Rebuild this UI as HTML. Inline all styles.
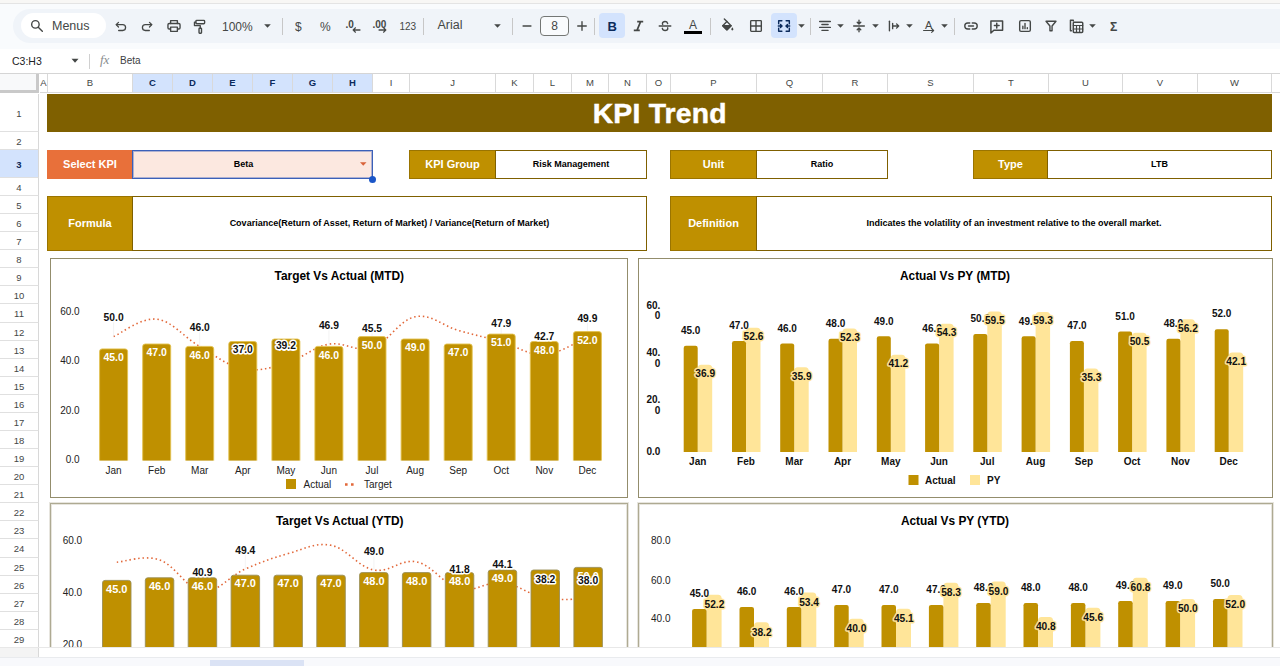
<!DOCTYPE html><html><head><meta charset="utf-8"><title>KPI Trend</title><style>
*{box-sizing:border-box;margin:0;padding:0}
html,body{width:1280px;height:666px;overflow:hidden;background:#f9fbfd;font-family:"Liberation Sans", sans-serif;}
.abs{position:absolute}
#root{position:relative;width:1280px;height:666px;overflow:hidden;background:#f9fbfd}
.ch{position:absolute;top:74px;height:19px;font-size:9.5px;line-height:18px;text-align:center;color:#444746;background:#fff;border-right:1px solid #d9d9d9;border-bottom:1px solid #d9d9d9}
.ch.sel{background:#d3e3fd;color:#0b2a5b;font-weight:bold}
.rh{position:absolute;left:0;width:39px;font-size:9.5px;text-align:center;color:#444746;background:#fff;border-right:1px solid #d8d8d8;border-bottom:1px solid #e0e0e0}
.rh.sel{background:#d3e3fd;color:#0b2a5b;font-weight:bold}
.lbl{position:absolute;background:#bf9000;color:#fff;font-weight:bold;font-size:11px;text-align:center;border:1px solid #7f6000}
.val{position:absolute;background:#fff;color:#000;font-weight:bold;font-size:9px;text-align:center;border:1px solid #7f6000}
.chart{position:absolute;background:#fff;border:1px solid #938d6c}
svg text{font-family:"Liberation Sans", sans-serif}
.tb{position:absolute;color:#444746}
</style></head><body><div id="root">
<div class="abs" style="left:0;top:0;width:1280px;height:3px;background:#f8f7f5"></div>
<div class="abs" style="left:0;top:3px;width:1280px;height:1px;background:#e4e4e4"></div>
<div class="abs" style="left:13px;top:9px;width:1290px;height:34px;border-radius:17px;background:#f0f4f9"></div>
<div class="abs" style="left:21px;top:13px;width:85px;height:25px;border-radius:13px;background:#fff"></div>
<svg class="abs" style="left:29.0px;top:18.0px" width="16" height="16" viewBox="0 0 18 18" fill="none" stroke="#444746" stroke-width="1.55" stroke-linecap="round" stroke-linejoin="round"><circle cx="7.2" cy="7.2" r="4.2"/><path d="M10.4 10.4L15 15"/></svg>
<div class="tb" style="left:52px;top:16.9px;height:18px;line-height:18px;font-size:12.5px;font-weight:normal;color:#444746;white-space:nowrap;">Menus</div>
<svg class="abs" style="left:113.5px;top:19.3px" width="15" height="15" viewBox="0 0 18 18" fill="none" stroke="#444746" stroke-width="1.55" stroke-linecap="round" stroke-linejoin="round"><path d="M5.4 4L2.6 6.8l2.8 2.8"/><path d="M3 6.8h7.4a3.5 3.5 0 0 1 0 7H5.6"/></svg>
<svg class="abs" style="left:139.0px;top:19.3px" width="15" height="15" viewBox="0 0 18 18" fill="none" stroke="#444746" stroke-width="1.55" stroke-linecap="round" stroke-linejoin="round"><path d="M12.6 4l2.8 2.8-2.8 2.8"/><path d="M15 6.8H7.6a3.5 3.5 0 0 0 0 7h4.8"/></svg>
<svg class="abs" style="left:165.7px;top:18.0px" width="16" height="16" viewBox="0 0 18 18" fill="none" stroke="#444746" stroke-width="1.55" stroke-linecap="round" stroke-linejoin="round"><path d="M5.2 6.2V3h7.6v3.2"/><rect x="2.2" y="6.2" width="13.6" height="6.2" rx="1.4"/><rect x="5.2" y="10.2" width="7.6" height="4.8" fill="#f0f4f9"/></svg>
<svg class="abs" style="left:192.0px;top:18.6px" width="16" height="16" viewBox="0 0 18 18" fill="none" stroke="#444746" stroke-width="1.55" stroke-linecap="round" stroke-linejoin="round"><rect x="4.4" y="1.6" width="9.8" height="3.8" rx="0.9"/><path d="M4.4 3.5H2.8v3.9h6.5v3"/><rect x="7.9" y="10.4" width="2.8" height="5.6" rx="0.7"/></svg>
<div class="tb" style="left:222px;top:17.5px;height:18px;line-height:18px;font-size:12px;font-weight:normal;color:#444746;white-space:nowrap;">100%</div>
<svg class="abs" style="left:263.5px;top:24.4px" width="7" height="4" viewBox="0 0 7 4"><path d="M0.2 0.2h6.6L3.5 3.8z" fill="#444746"/></svg>
<div class="abs" style="left:282px;top:17.5px;width:1px;height:17px;background:#c7c7c7"></div>
<div class="tb" style="left:295px;top:17.5px;height:18px;line-height:18px;font-size:12px;font-weight:normal;color:#444746;white-space:nowrap;">$</div>
<div class="tb" style="left:320px;top:17.5px;height:18px;line-height:18px;font-size:12px;font-weight:normal;color:#444746;white-space:nowrap;">%</div>
<div class="tb" style="left:345.5px;top:17.5px;height:18px;line-height:18px;font-size:10px;font-weight:bold;color:#444746;white-space:nowrap;letter-spacing:-0.1px;margin-top:-2px">.0</div>
<svg class="abs" style="left:351.5px;top:27.3px" width="9" height="6" viewBox="0 0 10 7" fill="none" stroke="#444746" stroke-width="1.6" stroke-linecap="round" stroke-linejoin="round"><path d="M9 3.5H1.2M3.6 1L1.2 3.5l2.4 2.5"/></svg>
<div class="tb" style="left:372.5px;top:17.5px;height:18px;line-height:18px;font-size:10px;font-weight:bold;color:#444746;white-space:nowrap;letter-spacing:-0.1px;margin-top:-2px">.00</div>
<svg class="abs" style="left:377.8px;top:27.3px" width="9" height="6" viewBox="0 0 10 7" fill="none" stroke="#444746" stroke-width="1.6" stroke-linecap="round" stroke-linejoin="round"><path d="M1 3.5h7.8M6.4 1l2.4 2.5-2.4 2.5"/></svg>
<div class="tb" style="left:399.5px;top:17.5px;height:18px;line-height:18px;font-size:10px;font-weight:normal;color:#444746;white-space:nowrap;">123</div>
<div class="abs" style="left:423px;top:17.5px;width:1px;height:17px;background:#c7c7c7"></div>
<div class="tb" style="left:437.5px;top:16.3px;height:18px;line-height:18px;font-size:12.5px;font-weight:normal;color:#444746;white-space:nowrap;">Arial</div>
<svg class="abs" style="left:493.5px;top:24.4px" width="7" height="4" viewBox="0 0 7 4"><path d="M0.2 0.2h6.6L3.5 3.8z" fill="#444746"/></svg>
<div class="abs" style="left:512px;top:17.5px;width:1px;height:17px;background:#c7c7c7"></div>
<svg class="abs" style="left:519.3px;top:17.6px" width="16" height="16" viewBox="0 0 18 18" fill="none" stroke="#444746" stroke-width="1.55" stroke-linecap="round" stroke-linejoin="round"><path d="M4.6 9h8.8"/></svg>
<div class="abs" style="left:540px;top:16px;width:29px;height:20px;border:1px solid #747775;border-radius:4px;background:#f9fbfd;font-size:12px;line-height:18px;text-align:center;color:#444746">8</div>
<svg class="abs" style="left:573.5px;top:17.8px" width="16" height="16" viewBox="0 0 18 18" fill="none" stroke="#444746" stroke-width="1.55" stroke-linecap="round" stroke-linejoin="round"><path d="M4.2 9h9.6M9 4.2v9.6"/></svg>
<div class="abs" style="left:594px;top:17.5px;width:1px;height:17px;background:#c7c7c7"></div>
<div class="abs" style="left:599px;top:13px;width:26px;height:25px;border-radius:4px;background:#d3e3fd"></div>
<div class="tb" style="left:607.5px;top:17.5px;height:18px;line-height:18px;font-size:13px;font-weight:bold;color:#0b2a5b;white-space:nowrap;">B</div>
<svg class="abs" style="left:632px;top:19px" width="13" height="14" viewBox="0 0 13 14" fill="none" stroke="#444746" stroke-width="1.7" stroke-linecap="butt"><path d="M5.2 2.7h6M1.8 11.3h6M8.6 2.7L5 11.3"/></svg>
<svg class="abs" style="left:657.0px;top:18.0px" width="16" height="16" viewBox="0 0 18 18" fill="none" stroke="#444746" stroke-width="1.55" stroke-linecap="round" stroke-linejoin="round"><path d="M2.5 9h13" /><path d="M12 6.2c-.4-1.4-1.5-2.2-3-2.2-1.7 0-2.9.9-2.9 2.2 0 .4.1.8.3 1.1M6 11.6c.3 1.5 1.5 2.4 3.1 2.4 1.7 0 3-.9 3-2.3 0-.3 0-.5-.1-.7"/></svg>
<div class="tb" style="left:689px;top:15.5px;height:18px;line-height:18px;font-size:12px;font-weight:normal;color:#444746;white-space:nowrap;font-weight:normal">A</div>
<div class="abs" style="left:684px;top:31px;width:18px;height:3px;background:#000"></div>
<div class="abs" style="left:710px;top:17.5px;width:1px;height:17px;background:#c7c7c7"></div>
<svg class="abs" style="left:719.0px;top:16.5px" width="16" height="16" viewBox="0 0 18 18" fill="none" stroke="#444746" stroke-width="1.55" stroke-linecap="round" stroke-linejoin="round"><path d="M6 2.2l2.9 2.9"/><path d="M8.9 5.1L4.2 9.8 8.9 14.5l4.7-4.7z" stroke-width="1.5"/><path d="M4.2 9.8h9.4L8.9 14.5z" fill="#444746"/><path d="M15 11.6c.8 1.1 1.2 1.8 1.2 2.3a1.2 1.2 0 0 1-2.4 0c0-.5.4-1.2 1.2-2.3z" fill="#444746" stroke="none"/></svg>
<svg class="abs" style="left:748.0px;top:18.0px" width="16" height="16" viewBox="0 0 18 18" fill="none" stroke="#444746" stroke-width="1.55" stroke-linecap="round" stroke-linejoin="round"><rect x="3" y="3" width="12" height="12" rx="0.8"/><path d="M9 3v12M3 9h12"/></svg>
<div class="abs" style="left:771px;top:13px;width:26px;height:25px;border-radius:4px;background:#d3e3fd"></div>
<svg class="abs" style="left:776px;top:18px" width="16" height="16" viewBox="0 0 18 18" fill="none" stroke="#0b2a5b" stroke-width="1.6" stroke-linecap="round" stroke-linejoin="round"><path d="M6.6 3H3v3.6M11.4 3H15v3.6M6.6 15H3v-3.6M11.4 15H15v-3.6"/><path d="M2.6 9h4M5 7.2L6.8 9 5 10.8M15.4 9h-4M13 7.2L11.2 9 13 10.8"/></svg>
<svg class="abs" style="left:797.5px;top:24.4px" width="7" height="4" viewBox="0 0 7 4"><path d="M0.2 0.2h6.6L3.5 3.8z" fill="#444746"/></svg>
<div class="abs" style="left:810px;top:17.5px;width:1px;height:17px;background:#c7c7c7"></div>
<svg class="abs" style="left:817.0px;top:18.0px" width="16" height="16" viewBox="0 0 18 18" fill="none" stroke="#444746" stroke-width="1.55" stroke-linecap="round" stroke-linejoin="round"><path d="M3 4h12M5.5 7.3h7M3 10.6h12M5.5 13.9h7"/></svg>
<svg class="abs" style="left:836.5px;top:24.4px" width="7" height="4" viewBox="0 0 7 4"><path d="M0.2 0.2h6.6L3.5 3.8z" fill="#444746"/></svg>
<svg class="abs" style="left:851.0px;top:18.0px" width="16" height="16" viewBox="0 0 18 18" fill="none" stroke="#444746" stroke-width="1.55" stroke-linecap="round" stroke-linejoin="round"><path d="M3 9h12"/><path d="M9 2.5v4M7 4.8l2 2 2-2M9 15.5v-4M7 13.2l2-2 2 2"/></svg>
<svg class="abs" style="left:871.5px;top:24.4px" width="7" height="4" viewBox="0 0 7 4"><path d="M0.2 0.2h6.6L3.5 3.8z" fill="#444746"/></svg>
<svg class="abs" style="left:885.0px;top:18.0px" width="16" height="16" viewBox="0 0 18 18" fill="none" stroke="#444746" stroke-width="1.55" stroke-linecap="round" stroke-linejoin="round"><path d="M5 3.6v10.8"/><path d="M8.6 6v6M8.6 9h6.8M13 6.6L15.4 9 13 11.4"/></svg>
<svg class="abs" style="left:905.5px;top:24.4px" width="7" height="4" viewBox="0 0 7 4"><path d="M0.2 0.2h6.6L3.5 3.8z" fill="#444746"/></svg>
<div class="tb" style="left:925px;top:15.7px;height:18px;line-height:18px;font-size:11px;font-weight:normal;color:#444746;white-space:nowrap;">A</div>
<svg class="abs" style="left:922px;top:26.6px" width="14" height="7" viewBox="0 0 18 8" fill="none" stroke="#444746" stroke-width="1.4" stroke-linecap="round" stroke-linejoin="round"><path d="M2 4h13M12.4 1.6L15 4l-2.6 2.4"/></svg>
<svg class="abs" style="left:940.5px;top:24.4px" width="7" height="4" viewBox="0 0 7 4"><path d="M0.2 0.2h6.6L3.5 3.8z" fill="#444746"/></svg>
<div class="abs" style="left:954px;top:17.5px;width:1px;height:17px;background:#c7c7c7"></div>
<svg class="abs" style="left:962.0px;top:18.0px" width="18" height="16" viewBox="-1 0 20 18" fill="none" stroke="#444746" stroke-width="1.55" stroke-linecap="round" stroke-linejoin="round"><path d="M7.6 5.6H5.4a3.4 3.4 0 0 0 0 6.8h2.2M10.4 5.6h2.2a3.4 3.4 0 0 1 0 6.8h-2.2M6.2 9h5.6"/></svg>
<svg class="abs" style="left:988.2px;top:17.6px" width="17.5" height="17.5" viewBox="0 0 18 18" fill="none" stroke="#444746" stroke-width="1.55" stroke-linecap="round" stroke-linejoin="round"><path d="M3 3h12v9.6H6L3 15.4z"/><path d="M9 5.4v4.8M6.6 7.8h4.8"/></svg>
<svg class="abs" style="left:1016.6px;top:18.0px" width="16" height="16" viewBox="0 0 18 18" fill="none" stroke="#444746" stroke-width="1.55" stroke-linecap="round" stroke-linejoin="round"><rect x="3" y="3" width="12" height="12" rx="1.6"/><path d="M6.6 12V9.2M9 12V6M11.6 12v-1"/></svg>
<svg class="abs" style="left:1043.0px;top:18.0px" width="16" height="16" viewBox="0 0 18 18" fill="none" stroke="#444746" stroke-width="1.55" stroke-linecap="round" stroke-linejoin="round"><path d="M3.4 3.6h11.2L10.2 9v5.4H7.8V9z"/></svg>
<svg class="abs" style="left:1067.5px;top:17.7px" width="17" height="17" viewBox="0 0 18 18" fill="none" stroke="#444746" stroke-width="1.55" stroke-linecap="round" stroke-linejoin="round"><path d="M5.6 3.2V2.4h-3v11h1"/><rect x="5.6" y="4.4" width="10" height="11" rx="1"/><path d="M5.6 8h10M5.6 11.6h10M9 8v7.4M12.3 8v7.4" stroke-width="1.2"/></svg>
<svg class="abs" style="left:1088.5px;top:24.4px" width="7" height="4" viewBox="0 0 7 4"><path d="M0.2 0.2h6.6L3.5 3.8z" fill="#444746"/></svg>
<div class="tb" style="left:1109.5px;top:17.5px;height:18px;line-height:18px;font-size:13.5px;font-weight:bold;color:#444746;white-space:nowrap;transform:scaleX(0.9);transform-origin:left">&Sigma;</div>
<div class="abs" style="left:0;top:49px;width:1280px;height:25px;background:#fff"></div>
<div class="abs" style="left:12px;top:54px;font-size:10.5px;color:#202124;line-height:14px">C3:H3</div>
<svg class="abs" style="left:70px;top:58px" width="10" height="6" viewBox="0 0 10 6"><path d="M1.5 0.8h7L5 4.8z" fill="#444746"/></svg>
<div class="abs" style="left:89px;top:54px;width:1px;height:15px;background:#d0d0d0"></div>
<div class="abs" style="left:100px;top:52px;font-size:13px;font-style:italic;color:#8a8d8f;font-family:'Liberation Serif',serif;line-height:16px">fx</div>
<div class="abs" style="left:120px;top:54px;font-size:10px;color:#3c4043;line-height:14px">Beta</div>
<div class="abs" style="left:0;top:73px;width:1280px;height:1px;background:#d5d5d5"></div>
<div class="abs" style="left:0;top:74px;width:1280px;height:573px;background:#fff"></div>
<div class="abs" style="left:0;top:74px;width:39px;height:19px;background:#f8f9fa;border-right:3px solid #c9c9c9;border-bottom:3px solid #c9c9c9"></div>
<div class="ch" style="left:40px;width:8px">A</div>
<div class="ch" style="left:48px;width:85px">B</div>
<div class="ch sel" style="left:133px;width:40px">C</div>
<div class="ch sel" style="left:173px;width:40px">D</div>
<div class="ch sel" style="left:213px;width:40px">E</div>
<div class="ch sel" style="left:253px;width:40px">F</div>
<div class="ch sel" style="left:293px;width:40px">G</div>
<div class="ch sel" style="left:333px;width:40px">H</div>
<div class="ch" style="left:373px;width:37px">I</div>
<div class="ch" style="left:410px;width:86px">J</div>
<div class="ch" style="left:496px;width:38px">K</div>
<div class="ch" style="left:534px;width:38px">L</div>
<div class="ch" style="left:572px;width:37px">M</div>
<div class="ch" style="left:609px;width:38px">N</div>
<div class="ch" style="left:647px;width:24px">O</div>
<div class="ch" style="left:671px;width:86px">P</div>
<div class="ch" style="left:757px;width:66px">Q</div>
<div class="ch" style="left:823px;width:65px">R</div>
<div class="ch" style="left:888px;width:86px">S</div>
<div class="ch" style="left:974px;width:75px">T</div>
<div class="ch" style="left:1049px;width:74px">U</div>
<div class="ch" style="left:1123px;width:75px">V</div>
<div class="ch" style="left:1198px;width:74px">W</div>
<div class="ch" style="left:1272px;width:19px"></div>
<div class="rh" style="top:94px;height:38px;line-height:39px">1</div>
<div class="rh" style="top:132px;height:18px;line-height:19px">2</div>
<div class="rh sel" style="top:150px;height:28px;line-height:29px">3</div>
<div class="rh" style="top:178px;height:18px;line-height:19px">4</div>
<div class="rh" style="top:196px;height:18px;line-height:19px">5</div>
<div class="rh" style="top:214px;height:18px;line-height:19px">6</div>
<div class="rh" style="top:232px;height:18px;line-height:19px">7</div>
<div class="rh" style="top:250px;height:18px;line-height:19px">8</div>
<div class="rh" style="top:268px;height:18px;line-height:19px">9</div>
<div class="rh" style="top:286px;height:18px;line-height:19px">10</div>
<div class="rh" style="top:304px;height:19px;line-height:20px">11</div>
<div class="rh" style="top:323px;height:18px;line-height:19px">12</div>
<div class="rh" style="top:341px;height:18px;line-height:19px">13</div>
<div class="rh" style="top:359px;height:18px;line-height:19px">14</div>
<div class="rh" style="top:377px;height:18px;line-height:19px">15</div>
<div class="rh" style="top:395px;height:18px;line-height:19px">16</div>
<div class="rh" style="top:413px;height:18px;line-height:19px">17</div>
<div class="rh" style="top:431px;height:18px;line-height:19px">18</div>
<div class="rh" style="top:449px;height:18px;line-height:19px">19</div>
<div class="rh" style="top:467px;height:18px;line-height:19px">20</div>
<div class="rh" style="top:485px;height:18px;line-height:19px">21</div>
<div class="rh" style="top:503px;height:18px;line-height:19px">22</div>
<div class="rh" style="top:521px;height:18px;line-height:19px">23</div>
<div class="rh" style="top:539px;height:19px;line-height:20px">24</div>
<div class="rh" style="top:558px;height:18px;line-height:19px">25</div>
<div class="rh" style="top:576px;height:18px;line-height:19px">26</div>
<div class="rh" style="top:594px;height:18px;line-height:19px">27</div>
<div class="rh" style="top:612px;height:18px;line-height:19px">28</div>
<div class="rh" style="top:630px;height:18px;line-height:19px">29</div>
<div class="rh" style="top:648px;height:18px;line-height:19px">30</div>
<div class="abs" style="left:47px;top:94px;width:1225px;height:38px;background:#7f6000;color:#fff;font-weight:bold;font-size:27.8px;line-height:39.5px;text-align:center;letter-spacing:0.2px"><span style="display:inline-block;transform:scaleX(1.02);-webkit-text-stroke:0.45px #fff">KPI Trend</span></div>
<div class="lbl" style="left:47px;top:150px;width:86px;height:29px;line-height:27px;background:#e8703a;border-color:#e8703a;font-size:11px">Select KPI</div>
<div class="abs" style="left:132px;top:150px;width:241px;height:29px;background:#fce8e0;border:1px solid #3b60b9;box-shadow:inset 0 0 0 1px rgba(59,96,185,0.4);font-size:9px;font-weight:bold;color:#000;text-align:center;line-height:27px;padding-right:18px">Beta</div>
<svg class="abs" style="left:360px;top:162px" width="6.5" height="4" viewBox="0 0 7 4"><path d="M0 0h7L3.5 4z" fill="#d9633a"/></svg>
<div class="abs" style="left:368.7px;top:175.8px;width:7px;height:7px;border-radius:3.5px;background:#1a56c8"></div>
<div class="lbl" style="left:409px;top:150px;width:87px;height:29px;line-height:27px;background:#bf9000;border-color:#9a7400;font-size:11px">KPI Group</div>
<div class="val" style="left:495px;top:150px;width:152px;height:29px;line-height:27px;">Risk Management</div>
<div class="lbl" style="left:670px;top:150px;width:87px;height:29px;line-height:27px;background:#bf9000;border-color:#9a7400;font-size:11px">Unit</div>
<div class="val" style="left:756px;top:150px;width:132px;height:29px;line-height:27px;">Ratio</div>
<div class="lbl" style="left:973px;top:150px;width:75px;height:29px;line-height:27px;background:#bf9000;border-color:#9a7400;font-size:11px">Type</div>
<div class="val" style="left:1047px;top:150px;width:225px;height:29px;line-height:27px;">LTB</div>
<div class="lbl" style="left:47px;top:196px;width:86px;height:55px;line-height:53px;background:#bf9000;border-color:#9a7400;font-size:11px">Formula</div>
<div class="val" style="left:132px;top:196px;width:515px;height:55px;line-height:53px;padding-right:0px">Covariance(Return of Asset, Return of Market) / Variance(Return of Market)</div>
<div class="lbl" style="left:670px;top:196px;width:87px;height:55px;line-height:53px;background:#bf9000;border-color:#9a7400;font-size:11px">Definition</div>
<div class="val" style="left:756px;top:196px;width:516px;height:55px;line-height:53px;">Indicates the volatility of an investment relative to the overall market.</div>
<div class="chart" style="left:50px;top:258px;width:578px;height:240px;overflow:hidden;">
<svg width="578" height="240" viewBox="0 0 578 240" style="position:absolute;left:-1px;top:-1px">
<text x="289.3" y="21.6" font-size="11.9" font-weight="bold" fill="#000" text-anchor="middle">Target Vs Actual (MTD)</text>
<text x="29.6" y="56.7" font-size="10" font-weight="normal" fill="#222" text-anchor="end">60.0</text>
<text x="29.6" y="105.7" font-size="10" font-weight="normal" fill="#222" text-anchor="end">40.0</text>
<text x="29.6" y="155.7" font-size="10" font-weight="normal" fill="#222" text-anchor="end">20.0</text>
<text x="29.6" y="205.2" font-size="10" font-weight="normal" fill="#222" text-anchor="end">0.0</text>
<path d="M63.6 78.6 C71.6 75.3 90.6 59.4 106.7 61.2 C122.7 63.1 133.7 79.2 149.7 88.4 C165.8 97.7 176.7 107.6 192.8 110.7 C208.9 113.9 219.8 109.9 235.9 105.3 C252.0 100.7 262.9 89.1 278.9 86.2 C295.0 83.3 305.9 94.8 322.0 89.7 C338.1 84.6 349.0 62.0 365.1 58.8 C381.2 55.5 392.1 67.7 408.2 72.4 C424.2 77.0 435.2 79.2 451.2 83.7 C467.3 88.3 478.2 97.5 494.3 96.6 C510.4 95.7 529.3 82.1 537.4 78.8" fill="none" stroke="#e2683a" stroke-width="1.6" stroke-dasharray="1.5 2.85" stroke-linecap="butt"/>
<path d="M63.6 64.0V78.6" stroke="#e6e6e6" stroke-width="0.5"/>
<path d="M149.7 74.0V88.4" stroke="#e6e6e6" stroke-width="0.5"/>
<path d="M192.8 96.5V110.7" stroke="#e6e6e6" stroke-width="0.5"/>
<path d="M235.9 92.0V105.3" stroke="#e6e6e6" stroke-width="0.5"/>
<path d="M278.9 72.0V86.2" stroke="#e6e6e6" stroke-width="0.5"/>
<path d="M322.0 75.0V89.7" stroke="#e6e6e6" stroke-width="0.5"/>
<path d="M451.2 70.0V83.7" stroke="#e6e6e6" stroke-width="0.5"/>
<path d="M494.3 83.0V96.6" stroke="#e6e6e6" stroke-width="0.5"/>
<path d="M537.4 65.0V78.8" stroke="#e6e6e6" stroke-width="0.5"/>
<rect x="49.6" y="90.9" width="28" height="114.4" rx="2.5" fill="#bf9000" stroke="#e3c250" stroke-width="0.9"/>
<rect x="92.7" y="86.0" width="28" height="119.3" rx="2.5" fill="#bf9000" stroke="#e3c250" stroke-width="0.9"/>
<rect x="135.7" y="88.4" width="28" height="116.9" rx="2.5" fill="#bf9000" stroke="#e3c250" stroke-width="0.9"/>
<rect x="178.8" y="83.5" width="28" height="121.8" rx="2.5" fill="#bf9000" stroke="#e3c250" stroke-width="0.9"/>
<rect x="221.9" y="81.0" width="28" height="124.3" rx="2.5" fill="#bf9000" stroke="#e3c250" stroke-width="0.9"/>
<rect x="264.9" y="88.4" width="28" height="116.9" rx="2.5" fill="#bf9000" stroke="#e3c250" stroke-width="0.9"/>
<rect x="308.0" y="78.6" width="28" height="126.8" rx="2.5" fill="#bf9000" stroke="#e3c250" stroke-width="0.9"/>
<rect x="351.1" y="81.0" width="28" height="124.3" rx="2.5" fill="#bf9000" stroke="#e3c250" stroke-width="0.9"/>
<rect x="394.2" y="86.0" width="28" height="119.3" rx="2.5" fill="#bf9000" stroke="#e3c250" stroke-width="0.9"/>
<rect x="437.2" y="76.1" width="28" height="129.2" rx="2.5" fill="#bf9000" stroke="#e3c250" stroke-width="0.9"/>
<rect x="480.3" y="83.5" width="28" height="121.8" rx="2.5" fill="#bf9000" stroke="#e3c250" stroke-width="0.9"/>
<rect x="523.4" y="73.6" width="28" height="131.7" rx="2.5" fill="#bf9000" stroke="#e3c250" stroke-width="0.9"/>
<rect x="47.6" y="202.6" width="516.8" height="5" fill="#fff"/>
<text x="63.6" y="103.1" font-size="10.5" font-weight="bold" fill="#fff" text-anchor="middle">45.0</text>
<text x="106.7" y="98.2" font-size="10.5" font-weight="bold" fill="#fff" text-anchor="middle">47.0</text>
<text x="149.7" y="100.6" font-size="10.5" font-weight="bold" fill="#fff" text-anchor="middle">46.0</text>
<text x="192.8" y="95.7" font-size="10.5" font-weight="bold" fill="#fff" text-anchor="middle">48.0</text>
<text x="235.9" y="93.2" font-size="10.5" font-weight="bold" fill="#fff" text-anchor="middle">49.0</text>
<text x="278.9" y="100.6" font-size="10.5" font-weight="bold" fill="#fff" text-anchor="middle">46.0</text>
<text x="322.0" y="90.8" font-size="10.5" font-weight="bold" fill="#fff" text-anchor="middle">50.0</text>
<text x="365.1" y="93.2" font-size="10.5" font-weight="bold" fill="#fff" text-anchor="middle">49.0</text>
<text x="408.2" y="98.2" font-size="10.5" font-weight="bold" fill="#fff" text-anchor="middle">47.0</text>
<text x="451.2" y="88.3" font-size="10.5" font-weight="bold" fill="#fff" text-anchor="middle">51.0</text>
<text x="494.3" y="95.7" font-size="10.5" font-weight="bold" fill="#fff" text-anchor="middle">48.0</text>
<text x="537.4" y="85.8" font-size="10.5" font-weight="bold" fill="#fff" text-anchor="middle">52.0</text>
<text x="63.6" y="62.7" font-size="10.3" font-weight="bold" fill="#111" text-anchor="middle" stroke="#fff" stroke-width="3" stroke-linejoin="round" paint-order="stroke">50.0</text>
<text x="149.7" y="72.7" font-size="10.3" font-weight="bold" fill="#111" text-anchor="middle" stroke="#fff" stroke-width="3" stroke-linejoin="round" paint-order="stroke">46.0</text>
<text x="192.8" y="95.2" font-size="10.3" font-weight="bold" fill="#111" text-anchor="middle" stroke="#fff" stroke-width="3" stroke-linejoin="round" paint-order="stroke">37.0</text>
<text x="235.9" y="90.7" font-size="10.3" font-weight="bold" fill="#111" text-anchor="middle" stroke="#fff" stroke-width="3" stroke-linejoin="round" paint-order="stroke">39.2</text>
<text x="278.9" y="70.7" font-size="10.3" font-weight="bold" fill="#111" text-anchor="middle" stroke="#fff" stroke-width="3" stroke-linejoin="round" paint-order="stroke">46.9</text>
<text x="322.0" y="73.7" font-size="10.3" font-weight="bold" fill="#111" text-anchor="middle" stroke="#fff" stroke-width="3" stroke-linejoin="round" paint-order="stroke">45.5</text>
<text x="451.2" y="68.7" font-size="10.3" font-weight="bold" fill="#111" text-anchor="middle" stroke="#fff" stroke-width="3" stroke-linejoin="round" paint-order="stroke">47.9</text>
<text x="494.3" y="81.7" font-size="10.3" font-weight="bold" fill="#111" text-anchor="middle" stroke="#fff" stroke-width="3" stroke-linejoin="round" paint-order="stroke">42.7</text>
<text x="537.4" y="63.7" font-size="10.3" font-weight="bold" fill="#111" text-anchor="middle" stroke="#fff" stroke-width="3" stroke-linejoin="round" paint-order="stroke">49.9</text>
<text x="63.6" y="215.7" font-size="10" font-weight="normal" fill="#222" text-anchor="middle">Jan</text>
<text x="106.7" y="215.7" font-size="10" font-weight="normal" fill="#222" text-anchor="middle">Feb</text>
<text x="149.7" y="215.7" font-size="10" font-weight="normal" fill="#222" text-anchor="middle">Mar</text>
<text x="192.8" y="215.7" font-size="10" font-weight="normal" fill="#222" text-anchor="middle">Apr</text>
<text x="235.9" y="215.7" font-size="10" font-weight="normal" fill="#222" text-anchor="middle">May</text>
<text x="278.9" y="215.7" font-size="10" font-weight="normal" fill="#222" text-anchor="middle">Jun</text>
<text x="322.0" y="215.7" font-size="10" font-weight="normal" fill="#222" text-anchor="middle">Jul</text>
<text x="365.1" y="215.7" font-size="10" font-weight="normal" fill="#222" text-anchor="middle">Aug</text>
<text x="408.2" y="215.7" font-size="10" font-weight="normal" fill="#222" text-anchor="middle">Sep</text>
<text x="451.2" y="215.7" font-size="10" font-weight="normal" fill="#222" text-anchor="middle">Oct</text>
<text x="494.3" y="215.7" font-size="10" font-weight="normal" fill="#222" text-anchor="middle">Nov</text>
<text x="537.4" y="215.7" font-size="10" font-weight="normal" fill="#222" text-anchor="middle">Dec</text>
<rect x="236.0" y="221.0" width="10" height="10" fill="#bf9000"/>
<text x="253.5" y="229.7" font-size="10" font-weight="normal" fill="#222" text-anchor="start">Actual</text>
<path d="M295.0 226.5h12" stroke="#e2683a" stroke-width="2.6" stroke-dasharray="2.6 3.4"/>
<text x="314.0" y="229.7" font-size="10" font-weight="normal" fill="#222" text-anchor="start">Target</text>
</svg></div>
<div class="chart" style="left:638px;top:258px;width:635px;height:240px;overflow:hidden;">
<svg width="635" height="240" viewBox="0 0 635 240" style="position:absolute;left:-1px;top:-1px">
<text x="317.0" y="21.6" font-size="11.9" font-weight="bold" fill="#000" text-anchor="middle">Actual Vs PY (MTD)</text>
<text x="22.3" y="50.6" font-size="10" font-weight="bold" fill="#111" text-anchor="end">60.</text>
<text x="22.3" y="61.0" font-size="10" font-weight="bold" fill="#111" text-anchor="end">0</text>
<text x="22.3" y="98.1" font-size="10" font-weight="bold" fill="#111" text-anchor="end">40.</text>
<text x="22.3" y="108.5" font-size="10" font-weight="bold" fill="#111" text-anchor="end">0</text>
<text x="22.3" y="145.1" font-size="10" font-weight="bold" fill="#111" text-anchor="end">20.</text>
<text x="22.3" y="155.5" font-size="10" font-weight="bold" fill="#111" text-anchor="end">0</text>
<text x="22.3" y="196.6" font-size="10" font-weight="bold" fill="#111" text-anchor="end">0.0</text>
<rect x="59.7" y="106.8" width="14.5" height="90.9" rx="3.5" fill="#ffe599"/>
<rect x="45.7" y="87.7" width="14" height="109.0" rx="2.2" fill="#bf9000"/>
<rect x="108.0" y="69.8" width="14.5" height="127.9" rx="3.5" fill="#ffe599"/>
<rect x="94.0" y="83.0" width="14" height="113.7" rx="2.2" fill="#bf9000"/>
<rect x="156.2" y="109.2" width="14.5" height="88.5" rx="3.5" fill="#ffe599"/>
<rect x="142.2" y="85.4" width="14" height="111.3" rx="2.2" fill="#bf9000"/>
<rect x="204.5" y="70.5" width="14.5" height="127.2" rx="3.5" fill="#ffe599"/>
<rect x="190.5" y="80.7" width="14" height="116.0" rx="2.2" fill="#bf9000"/>
<rect x="252.8" y="96.7" width="14.5" height="101.0" rx="3.5" fill="#ffe599"/>
<rect x="238.8" y="78.3" width="14" height="118.4" rx="2.2" fill="#bf9000"/>
<rect x="301.1" y="65.8" width="14.5" height="131.9" rx="3.5" fill="#ffe599"/>
<rect x="287.1" y="85.4" width="14" height="111.3" rx="2.2" fill="#bf9000"/>
<rect x="349.3" y="53.6" width="14.5" height="144.1" rx="3.5" fill="#ffe599"/>
<rect x="335.3" y="75.9" width="14" height="120.8" rx="2.2" fill="#bf9000"/>
<rect x="397.6" y="54.0" width="14.5" height="143.7" rx="3.5" fill="#ffe599"/>
<rect x="383.6" y="78.3" width="14" height="118.4" rx="2.2" fill="#bf9000"/>
<rect x="445.9" y="110.6" width="14.5" height="87.1" rx="3.5" fill="#ffe599"/>
<rect x="431.9" y="83.0" width="14" height="113.7" rx="2.2" fill="#bf9000"/>
<rect x="494.1" y="74.8" width="14.5" height="122.9" rx="3.5" fill="#ffe599"/>
<rect x="480.1" y="73.6" width="14" height="123.1" rx="2.2" fill="#bf9000"/>
<rect x="542.4" y="61.3" width="14.5" height="136.4" rx="3.5" fill="#ffe599"/>
<rect x="528.4" y="80.7" width="14" height="116.0" rx="2.2" fill="#bf9000"/>
<rect x="590.7" y="94.6" width="14.5" height="103.1" rx="3.5" fill="#ffe599"/>
<rect x="576.7" y="71.2" width="14" height="125.5" rx="2.2" fill="#bf9000"/>
<rect x="43.7" y="194.0" width="579.2" height="5" fill="#fff"/>
<text x="52.7" y="75.9" font-size="10" font-weight="bold" fill="#111" text-anchor="middle">45.0</text>
<text x="101.0" y="71.2" font-size="10" font-weight="bold" fill="#111" text-anchor="middle">47.0</text>
<text x="149.2" y="73.6" font-size="10" font-weight="bold" fill="#111" text-anchor="middle">46.0</text>
<text x="197.5" y="68.9" font-size="10" font-weight="bold" fill="#111" text-anchor="middle">48.0</text>
<text x="245.8" y="66.5" font-size="10" font-weight="bold" fill="#111" text-anchor="middle">49.0</text>
<text x="294.1" y="73.6" font-size="10" font-weight="bold" fill="#111" text-anchor="middle">46.0</text>
<text x="342.3" y="64.1" font-size="10" font-weight="bold" fill="#111" text-anchor="middle">50.0</text>
<text x="390.6" y="66.5" font-size="10" font-weight="bold" fill="#111" text-anchor="middle">49.0</text>
<text x="438.9" y="71.2" font-size="10" font-weight="bold" fill="#111" text-anchor="middle">47.0</text>
<text x="487.1" y="61.8" font-size="10" font-weight="bold" fill="#111" text-anchor="middle">51.0</text>
<text x="535.4" y="68.9" font-size="10" font-weight="bold" fill="#111" text-anchor="middle">48.0</text>
<text x="583.7" y="59.4" font-size="10" font-weight="bold" fill="#111" text-anchor="middle">52.0</text>
<text x="67.2" y="119.1" font-size="10.2" font-weight="bold" fill="#111" text-anchor="middle" stroke="#ffe599" stroke-width="3" stroke-linejoin="round" paint-order="stroke">36.9</text>
<text x="115.5" y="82.1" font-size="10.2" font-weight="bold" fill="#111" text-anchor="middle" stroke="#ffe599" stroke-width="3" stroke-linejoin="round" paint-order="stroke">52.6</text>
<text x="163.7" y="121.5" font-size="10.2" font-weight="bold" fill="#111" text-anchor="middle" stroke="#ffe599" stroke-width="3" stroke-linejoin="round" paint-order="stroke">35.9</text>
<text x="212.0" y="82.8" font-size="10.2" font-weight="bold" fill="#111" text-anchor="middle" stroke="#ffe599" stroke-width="3" stroke-linejoin="round" paint-order="stroke">52.3</text>
<text x="260.3" y="109.0" font-size="10.2" font-weight="bold" fill="#111" text-anchor="middle" stroke="#ffe599" stroke-width="3" stroke-linejoin="round" paint-order="stroke">41.2</text>
<text x="308.6" y="78.1" font-size="10.2" font-weight="bold" fill="#111" text-anchor="middle" stroke="#ffe599" stroke-width="3" stroke-linejoin="round" paint-order="stroke">54.3</text>
<text x="356.8" y="65.9" font-size="10.2" font-weight="bold" fill="#111" text-anchor="middle" stroke="#ffe599" stroke-width="3" stroke-linejoin="round" paint-order="stroke">59.5</text>
<text x="405.1" y="66.3" font-size="10.2" font-weight="bold" fill="#111" text-anchor="middle" stroke="#ffe599" stroke-width="3" stroke-linejoin="round" paint-order="stroke">59.3</text>
<text x="453.4" y="122.9" font-size="10.2" font-weight="bold" fill="#111" text-anchor="middle" stroke="#ffe599" stroke-width="3" stroke-linejoin="round" paint-order="stroke">35.3</text>
<text x="501.6" y="87.1" font-size="10.2" font-weight="bold" fill="#111" text-anchor="middle" stroke="#ffe599" stroke-width="3" stroke-linejoin="round" paint-order="stroke">50.5</text>
<text x="549.9" y="73.6" font-size="10.2" font-weight="bold" fill="#111" text-anchor="middle" stroke="#ffe599" stroke-width="3" stroke-linejoin="round" paint-order="stroke">56.2</text>
<text x="598.2" y="106.9" font-size="10.2" font-weight="bold" fill="#111" text-anchor="middle" stroke="#ffe599" stroke-width="3" stroke-linejoin="round" paint-order="stroke">42.1</text>
<text x="59.7" y="207.2" font-size="10" font-weight="bold" fill="#111" text-anchor="middle">Jan</text>
<text x="108.0" y="207.2" font-size="10" font-weight="bold" fill="#111" text-anchor="middle">Feb</text>
<text x="156.2" y="207.2" font-size="10" font-weight="bold" fill="#111" text-anchor="middle">Mar</text>
<text x="204.5" y="207.2" font-size="10" font-weight="bold" fill="#111" text-anchor="middle">Apr</text>
<text x="252.8" y="207.2" font-size="10" font-weight="bold" fill="#111" text-anchor="middle">May</text>
<text x="301.1" y="207.2" font-size="10" font-weight="bold" fill="#111" text-anchor="middle">Jun</text>
<text x="349.3" y="207.2" font-size="10" font-weight="bold" fill="#111" text-anchor="middle">Jul</text>
<text x="397.6" y="207.2" font-size="10" font-weight="bold" fill="#111" text-anchor="middle">Aug</text>
<text x="445.9" y="207.2" font-size="10" font-weight="bold" fill="#111" text-anchor="middle">Sep</text>
<text x="494.1" y="207.2" font-size="10" font-weight="bold" fill="#111" text-anchor="middle">Oct</text>
<text x="542.4" y="207.2" font-size="10" font-weight="bold" fill="#111" text-anchor="middle">Nov</text>
<text x="590.7" y="207.2" font-size="10" font-weight="bold" fill="#111" text-anchor="middle">Dec</text>
<rect x="270.5" y="217.0" width="10" height="10" fill="#bf9000"/>
<text x="287.0" y="225.7" font-size="10" font-weight="bold" fill="#111" text-anchor="start">Actual</text>
<rect x="332.0" y="217.0" width="10" height="10" fill="#ffe599"/>
<text x="349.0" y="225.7" font-size="10" font-weight="bold" fill="#111" text-anchor="start">PY</text>
</svg></div>
<div class="chart" style="left:50px;top:503px;width:578px;height:160px;overflow:hidden;border-color:#aeaa92;box-shadow:0 0 0 1px rgba(174,170,146,0.3), inset 0 0 0 1px rgba(174,170,146,0.3);">
<svg width="578" height="160" viewBox="0 0 578 160" style="position:absolute;left:-1px;top:-1px">
<text x="289.7" y="21.8" font-size="11.9" font-weight="bold" fill="#000" text-anchor="middle">Target Vs Actual (YTD)</text>
<text x="32.2" y="41.2" font-size="10" font-weight="normal" fill="#222" text-anchor="end">60.0</text>
<text x="32.2" y="93.0" font-size="10" font-weight="normal" fill="#222" text-anchor="end">40.0</text>
<text x="32.2" y="145.2" font-size="10" font-weight="normal" fill="#222" text-anchor="end">20.0</text>
<path d="M66.8 59.2 C74.7 58.8 93.6 51.5 109.6 56.9 C125.6 62.2 136.5 86.4 152.4 88.1 C168.4 89.8 179.3 72.9 195.3 66.0 C211.3 59.0 222.2 55.0 238.1 50.6 C254.1 46.2 265.0 39.2 281.0 42.3 C297.0 45.4 307.9 63.9 323.9 67.0 C339.8 70.1 350.7 55.4 366.7 58.9 C382.7 62.4 393.6 81.8 409.6 85.7 C425.5 89.6 436.4 78.0 452.4 79.7 C468.4 81.5 479.3 92.1 495.2 95.1 C511.2 98.0 530.1 95.5 538.1 95.6" fill="none" stroke="#e2683a" stroke-width="1.6" stroke-dasharray="1.5 2.85" stroke-linecap="butt"/>
<path d="M152.4 74.0V88.1" stroke="#e6e6e6" stroke-width="0.5"/>
<path d="M195.3 52.0V66.0" stroke="#e6e6e6" stroke-width="0.5"/>
<path d="M323.9 53.6V67.0" stroke="#e6e6e6" stroke-width="0.5"/>
<path d="M409.6 71.7V85.7" stroke="#e6e6e6" stroke-width="0.5"/>
<path d="M452.4 65.8V79.7" stroke="#e6e6e6" stroke-width="0.5"/>
<path d="M495.2 81.5V95.1" stroke="#e6e6e6" stroke-width="0.5"/>
<path d="M538.1 82.3V95.6" stroke="#e6e6e6" stroke-width="0.5"/>
<rect x="52.5" y="77.4" width="28.5" height="120.0" rx="2.5" fill="#bf9000" stroke="#9a8f58" stroke-width="0.9"/>
<rect x="95.3" y="74.8" width="28.5" height="122.6" rx="2.5" fill="#bf9000" stroke="#9a8f58" stroke-width="0.9"/>
<rect x="138.2" y="74.8" width="28.5" height="122.6" rx="2.5" fill="#bf9000" stroke="#9a8f58" stroke-width="0.9"/>
<rect x="181.1" y="72.2" width="28.5" height="125.2" rx="2.5" fill="#bf9000" stroke="#9a8f58" stroke-width="0.9"/>
<rect x="223.9" y="72.2" width="28.5" height="125.2" rx="2.5" fill="#bf9000" stroke="#9a8f58" stroke-width="0.9"/>
<rect x="266.8" y="72.2" width="28.5" height="125.2" rx="2.5" fill="#bf9000" stroke="#9a8f58" stroke-width="0.9"/>
<rect x="309.6" y="69.6" width="28.5" height="127.8" rx="2.5" fill="#bf9000" stroke="#9a8f58" stroke-width="0.9"/>
<rect x="352.4" y="69.6" width="28.5" height="127.8" rx="2.5" fill="#bf9000" stroke="#9a8f58" stroke-width="0.9"/>
<rect x="395.3" y="69.6" width="28.5" height="127.8" rx="2.5" fill="#bf9000" stroke="#9a8f58" stroke-width="0.9"/>
<rect x="438.2" y="67.0" width="28.5" height="130.4" rx="2.5" fill="#bf9000" stroke="#9a8f58" stroke-width="0.9"/>
<rect x="481.0" y="67.0" width="28.5" height="130.4" rx="2.5" fill="#bf9000" stroke="#9a8f58" stroke-width="0.9"/>
<rect x="523.9" y="64.4" width="28.5" height="133.0" rx="2.5" fill="#bf9000" stroke="#9a8f58" stroke-width="0.9"/>
<rect x="50.5" y="194.7" width="514.2" height="5" fill="#fff"/>
<text x="66.8" y="89.6" font-size="11" font-weight="bold" fill="#fff" text-anchor="middle">45.0</text>
<text x="109.6" y="87.0" font-size="11" font-weight="bold" fill="#fff" text-anchor="middle">46.0</text>
<text x="152.4" y="87.0" font-size="11" font-weight="bold" fill="#fff" text-anchor="middle">46.0</text>
<text x="195.3" y="84.4" font-size="11" font-weight="bold" fill="#fff" text-anchor="middle">47.0</text>
<text x="238.1" y="84.4" font-size="11" font-weight="bold" fill="#fff" text-anchor="middle">47.0</text>
<text x="281.0" y="84.4" font-size="11" font-weight="bold" fill="#fff" text-anchor="middle">47.0</text>
<text x="323.9" y="81.8" font-size="11" font-weight="bold" fill="#fff" text-anchor="middle">48.0</text>
<text x="366.7" y="81.8" font-size="11" font-weight="bold" fill="#fff" text-anchor="middle">48.0</text>
<text x="409.6" y="81.8" font-size="11" font-weight="bold" fill="#fff" text-anchor="middle">48.0</text>
<text x="452.4" y="79.2" font-size="11" font-weight="bold" fill="#fff" text-anchor="middle">49.0</text>
<text x="495.2" y="79.2" font-size="11" font-weight="bold" fill="#fff" text-anchor="middle">49.0</text>
<text x="538.1" y="76.6" font-size="11" font-weight="bold" fill="#fff" text-anchor="middle">50.0</text>
<text x="152.4" y="72.7" font-size="10.3" font-weight="bold" fill="#111" text-anchor="middle" stroke="#fff" stroke-width="3" stroke-linejoin="round" paint-order="stroke">40.9</text>
<text x="195.3" y="50.7" font-size="10.3" font-weight="bold" fill="#111" text-anchor="middle" stroke="#fff" stroke-width="3" stroke-linejoin="round" paint-order="stroke">49.4</text>
<text x="323.9" y="52.3" font-size="10.3" font-weight="bold" fill="#111" text-anchor="middle" stroke="#fff" stroke-width="3" stroke-linejoin="round" paint-order="stroke">49.0</text>
<text x="409.6" y="70.4" font-size="10.3" font-weight="bold" fill="#111" text-anchor="middle" stroke="#fff" stroke-width="3" stroke-linejoin="round" paint-order="stroke">41.8</text>
<text x="452.4" y="64.5" font-size="10.3" font-weight="bold" fill="#111" text-anchor="middle" stroke="#fff" stroke-width="3" stroke-linejoin="round" paint-order="stroke">44.1</text>
<text x="495.2" y="80.2" font-size="10.3" font-weight="bold" fill="#111" text-anchor="middle" stroke="#fff" stroke-width="3" stroke-linejoin="round" paint-order="stroke">38.2</text>
<text x="538.1" y="81.0" font-size="10.3" font-weight="bold" fill="#111" text-anchor="middle" stroke="#fff" stroke-width="3" stroke-linejoin="round" paint-order="stroke">38.0</text>
</svg></div>
<div class="chart" style="left:638px;top:503px;width:635px;height:160px;overflow:hidden;border-color:#aeaa92;box-shadow:0 0 0 1px rgba(174,170,146,0.3), inset 0 0 0 1px rgba(174,170,146,0.3);">
<svg width="635" height="160" viewBox="0 0 635 160" style="position:absolute;left:-1px;top:-1px">
<text x="317.0" y="21.8" font-size="11.9" font-weight="bold" fill="#000" text-anchor="middle">Actual Vs PY (YTD)</text>
<text x="32.5" y="40.9" font-size="10" font-weight="normal" fill="#222" text-anchor="end">80.0</text>
<text x="32.5" y="80.5" font-size="10" font-weight="normal" fill="#222" text-anchor="end">60.0</text>
<text x="32.5" y="119.4" font-size="10" font-weight="normal" fill="#222" text-anchor="end">40.0</text>
<rect x="68.6" y="91.7" width="15.0" height="106.6" rx="3.5" fill="#ffe599"/>
<rect x="54.1" y="105.9" width="14.5" height="91.4" rx="2.2" fill="#bf9000"/>
<rect x="116.0" y="119.2" width="15.0" height="79.1" rx="3.5" fill="#ffe599"/>
<rect x="101.5" y="103.9" width="14.5" height="93.4" rx="2.2" fill="#bf9000"/>
<rect x="163.3" y="89.4" width="15.0" height="108.9" rx="3.5" fill="#ffe599"/>
<rect x="148.8" y="103.9" width="14.5" height="93.4" rx="2.2" fill="#bf9000"/>
<rect x="210.7" y="115.7" width="15.0" height="82.6" rx="3.5" fill="#ffe599"/>
<rect x="196.2" y="101.9" width="14.5" height="95.4" rx="2.2" fill="#bf9000"/>
<rect x="258.0" y="105.7" width="15.0" height="92.6" rx="3.5" fill="#ffe599"/>
<rect x="243.5" y="101.9" width="14.5" height="95.4" rx="2.2" fill="#bf9000"/>
<rect x="305.4" y="79.7" width="15.0" height="118.6" rx="3.5" fill="#ffe599"/>
<rect x="290.9" y="101.9" width="14.5" height="95.4" rx="2.2" fill="#bf9000"/>
<rect x="352.7" y="78.4" width="15.0" height="119.9" rx="3.5" fill="#ffe599"/>
<rect x="338.2" y="100.0" width="14.5" height="97.3" rx="2.2" fill="#bf9000"/>
<rect x="400.0" y="114.1" width="15.0" height="84.2" rx="3.5" fill="#ffe599"/>
<rect x="385.5" y="100.0" width="14.5" height="97.3" rx="2.2" fill="#bf9000"/>
<rect x="447.4" y="104.7" width="15.0" height="93.6" rx="3.5" fill="#ffe599"/>
<rect x="432.9" y="100.0" width="14.5" height="97.3" rx="2.2" fill="#bf9000"/>
<rect x="494.8" y="74.8" width="15.0" height="123.5" rx="3.5" fill="#ffe599"/>
<rect x="480.2" y="98.0" width="14.5" height="99.3" rx="2.2" fill="#bf9000"/>
<rect x="542.1" y="96.0" width="15.0" height="102.2" rx="3.5" fill="#ffe599"/>
<rect x="527.6" y="98.0" width="14.5" height="99.3" rx="2.2" fill="#bf9000"/>
<rect x="589.5" y="92.1" width="15.0" height="106.2" rx="3.5" fill="#ffe599"/>
<rect x="575.0" y="96.0" width="14.5" height="101.2" rx="2.2" fill="#bf9000"/>
<rect x="52.1" y="194.6" width="568.2" height="5" fill="#fff"/>
<text x="61.4" y="94.1" font-size="10" font-weight="bold" fill="#111" text-anchor="middle">45.0</text>
<text x="108.7" y="92.1" font-size="10" font-weight="bold" fill="#111" text-anchor="middle">46.0</text>
<text x="156.1" y="92.1" font-size="10" font-weight="bold" fill="#111" text-anchor="middle">46.0</text>
<text x="203.4" y="90.1" font-size="10" font-weight="bold" fill="#111" text-anchor="middle">47.0</text>
<text x="250.8" y="90.1" font-size="10" font-weight="bold" fill="#111" text-anchor="middle">47.0</text>
<text x="298.1" y="90.1" font-size="10" font-weight="bold" fill="#111" text-anchor="middle">47.0</text>
<text x="345.5" y="88.2" font-size="10" font-weight="bold" fill="#111" text-anchor="middle">48.0</text>
<text x="392.8" y="88.2" font-size="10" font-weight="bold" fill="#111" text-anchor="middle">48.0</text>
<text x="440.2" y="88.2" font-size="10" font-weight="bold" fill="#111" text-anchor="middle">48.0</text>
<text x="487.5" y="86.2" font-size="10" font-weight="bold" fill="#111" text-anchor="middle">49.0</text>
<text x="534.8" y="86.2" font-size="10" font-weight="bold" fill="#111" text-anchor="middle">49.0</text>
<text x="582.2" y="84.2" font-size="10" font-weight="bold" fill="#111" text-anchor="middle">50.0</text>
<text x="76.4" y="105.0" font-size="10.2" font-weight="bold" fill="#111" text-anchor="middle" stroke="#ffe599" stroke-width="3" stroke-linejoin="round" paint-order="stroke">52.2</text>
<text x="123.7" y="132.5" font-size="10.2" font-weight="bold" fill="#111" text-anchor="middle" stroke="#ffe599" stroke-width="3" stroke-linejoin="round" paint-order="stroke">38.2</text>
<text x="171.1" y="102.7" font-size="10.2" font-weight="bold" fill="#111" text-anchor="middle" stroke="#ffe599" stroke-width="3" stroke-linejoin="round" paint-order="stroke">53.4</text>
<text x="218.4" y="129.0" font-size="10.2" font-weight="bold" fill="#111" text-anchor="middle" stroke="#ffe599" stroke-width="3" stroke-linejoin="round" paint-order="stroke">40.0</text>
<text x="265.8" y="119.0" font-size="10.2" font-weight="bold" fill="#111" text-anchor="middle" stroke="#ffe599" stroke-width="3" stroke-linejoin="round" paint-order="stroke">45.1</text>
<text x="313.1" y="93.0" font-size="10.2" font-weight="bold" fill="#111" text-anchor="middle" stroke="#ffe599" stroke-width="3" stroke-linejoin="round" paint-order="stroke">58.3</text>
<text x="360.5" y="91.7" font-size="10.2" font-weight="bold" fill="#111" text-anchor="middle" stroke="#ffe599" stroke-width="3" stroke-linejoin="round" paint-order="stroke">59.0</text>
<text x="407.8" y="127.4" font-size="10.2" font-weight="bold" fill="#111" text-anchor="middle" stroke="#ffe599" stroke-width="3" stroke-linejoin="round" paint-order="stroke">40.8</text>
<text x="455.2" y="118.0" font-size="10.2" font-weight="bold" fill="#111" text-anchor="middle" stroke="#ffe599" stroke-width="3" stroke-linejoin="round" paint-order="stroke">45.6</text>
<text x="502.5" y="88.1" font-size="10.2" font-weight="bold" fill="#111" text-anchor="middle" stroke="#ffe599" stroke-width="3" stroke-linejoin="round" paint-order="stroke">60.8</text>
<text x="549.8" y="109.3" font-size="10.2" font-weight="bold" fill="#111" text-anchor="middle" stroke="#ffe599" stroke-width="3" stroke-linejoin="round" paint-order="stroke">50.0</text>
<text x="597.2" y="105.4" font-size="10.2" font-weight="bold" fill="#111" text-anchor="middle" stroke="#ffe599" stroke-width="3" stroke-linejoin="round" paint-order="stroke">52.0</text>
</svg></div>
<div class="abs" style="left:0;top:647px;width:1280px;height:19px;background:#fff"></div>
<div class="abs" style="left:0;top:647px;width:38px;height:11px;background:#f4f4f4"></div>
<div class="abs" style="left:38px;top:647px;width:1px;height:11px;background:#d9d9d9"></div>
<div class="abs" style="left:0;top:647px;width:1280px;height:1px;background:#e8e8e8"></div>
<div class="abs" style="left:0;top:658px;width:1280px;height:8px;background:#f8f9fc"></div>
<div class="abs" style="left:0;top:657px;width:1280px;height:1px;background:#e9ebee"></div>
<div class="abs" style="left:210px;top:660px;width:94px;height:6px;background:#dbe3f5"></div>
</div></body></html>
